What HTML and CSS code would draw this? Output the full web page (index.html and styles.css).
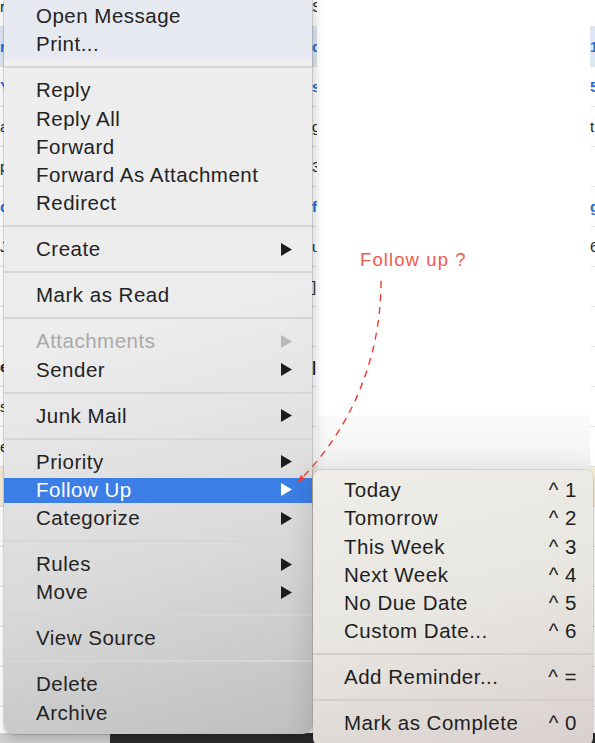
FILE: index.html
```html
<!DOCTYPE html>
<html lang="en">
<head>
    <meta charset="UTF-8">
    <title>Follow Up</title>
    <link rel="stylesheet" href="styles.css">
</head>
<body>
    <div class="mail">
        <div class="list">
            <div class="row"><span class="cell">r</span><span></span><span class="cell">S</span><span></span><span class="cell"></span></div>
            <div class="row selected"><span class="cell blue">n</span><span></span><span class="cell blue">c</span><span></span><span class="cell blue">1</span></div>
            <div class="row"><span class="cell blue">Y</span><span></span><span class="cell blue">s</span><span></span><span class="cell blue">5</span></div>
            <div class="row"><span class="cell">a</span><span></span><span class="cell">g</span><span></span><span class="cell">t</span></div>
            <div class="row"><span class="cell">p</span><span></span><span class="cell">3</span><span></span><span class="cell"></span></div>
            <div class="row"><span class="cell blue">c</span><span></span><span class="cell blue">f</span><span></span><span class="cell blue">g</span></div>
            <div class="row"><span class="cell">J</span><span></span><span class="cell">u</span><span></span><span class="cell">6</span></div>
            <div class="row"><span class="cell"></span><span></span><span class="cell">]</span><span></span><span class="cell"></span></div>
            <div class="row"><span class="cell"></span><span></span><span class="cell"></span><span></span><span class="cell"></span></div>
            <div class="row"><span class="cell bold">e</span><span></span><span class="cell bold">|</span><span></span><span class="cell"></span></div>
            <div class="row"><span class="cell">s</span><span></span><span class="cell"></span><span></span><span class="cell"></span></div>
            <div class="row"><span class="cell">e</span><span></span><span class="cell"></span><span></span><span class="cell"></span></div>
            <div class="row flagged"><span class="cell"></span><span></span><span class="cell"></span><span></span><span class="cell"></span></div>
            <div class="row"><span class="cell"></span><span></span><span class="cell"></span><span></span><span class="cell"></span></div>
            <div class="row"><span class="cell"></span><span></span><span class="cell"></span><span></span><span class="cell"></span></div>
            <div class="row"><span class="cell"></span><span></span><span class="cell"></span><span></span><span class="cell"></span></div>
            <div class="row"><span class="cell"></span><span></span><span class="cell"></span><span></span><span class="cell"></span></div>
            <div class="row"><span class="cell"></span><span></span><span class="cell"></span><span></span><span class="cell"></span></div>
        </div>
        <div class="footer">
            <div class="footer-left"></div>
            <div class="footer-dark"></div>
        </div>
    </div>

    <div class="whiteout"></div>

    <!-- context menu -->
    <div class="menu">
        <div class="group tinted">
            <div class="item">Open Message</div>
            <div class="item">Print...</div>
        </div>
        <div class="sep"></div>
        <div class="item">Reply</div>
        <div class="item">Reply All</div>
        <div class="item">Forward</div>
        <div class="item">Forward As Attachment</div>
        <div class="item">Redirect</div>
        <div class="sep"></div>
        <div class="item">Create <svg class="arrow" viewBox="0 0 11 13"><polygon points="0,0 11,6.5 0,13"/></svg></div>
        <div class="sep"></div>
        <div class="item">Mark as Read</div>
        <div class="sep"></div>
        <div class="item disabled">Attachments <svg class="arrow" viewBox="0 0 11 13"><polygon points="0,0 11,6.5 0,13"/></svg></div>
        <div class="item">Sender <svg class="arrow" viewBox="0 0 11 13"><polygon points="0,0 11,6.5 0,13"/></svg></div>
        <div class="sep"></div>
        <div class="item">Junk Mail <svg class="arrow" viewBox="0 0 11 13"><polygon points="0,0 11,6.5 0,13"/></svg></div>
        <div class="sep"></div>
        <div class="item">Priority <svg class="arrow" viewBox="0 0 11 13"><polygon points="0,0 11,6.5 0,13"/></svg></div>
        <div class="item active">Follow Up <svg class="arrow" viewBox="0 0 11 13"><polygon points="0,0 11,6.5 0,13"/></svg></div>
        <div class="item">Categorize <svg class="arrow" viewBox="0 0 11 13"><polygon points="0,0 11,6.5 0,13"/></svg></div>
        <div class="sep"></div>
        <div class="item">Rules <svg class="arrow" viewBox="0 0 11 13"><polygon points="0,0 11,6.5 0,13"/></svg></div>
        <div class="item">Move <svg class="arrow" viewBox="0 0 11 13"><polygon points="0,0 11,6.5 0,13"/></svg></div>
        <div class="sep"></div>
        <div class="item">View Source</div>
        <div class="sep"></div>
        <div class="item">Delete</div>
        <div class="item">Archive</div>
    </div>

    <!-- follow up submenu -->
    <div class="submenu">
        <div class="item">Today <span class="key">^ 1</span></div>
        <div class="item">Tomorrow <span class="key">^ 2</span></div>
        <div class="item">This Week <span class="key">^ 3</span></div>
        <div class="item">Next Week <span class="key">^ 4</span></div>
        <div class="item">No Due Date <span class="key">^ 5</span></div>
        <div class="item">Custom Date... <span class="key">^ 6</span></div>
        <div class="sep"></div>
        <div class="item">Add Reminder... <span class="key">^ =</span></div>
        <div class="sep"></div>
        <div class="item">Mark as Complete <span class="key">^ 0</span></div>
    </div>

    <div class="note-text">Follow up ?</div>
    <svg class="note" viewBox="0 0 595 743">
        <path d="M381 281 C381 360 350 430 299 481" fill="none" stroke="#ec3b30" stroke-width="1.4" stroke-dasharray="7 6"/>
        <polygon points="297,483 305,479 301,475" fill="#ec3b30"/>
    </svg>
</body>
</html>
```

FILE: styles.css
```css
body {
    margin: 0;
    width: 595px;
    height: 743px;
    overflow: hidden;
    position: relative;
    background: #ffffff;
    font-family: 'Liberation Sans', Arial, sans-serif;
}
.mail {
    display: flex;
    flex-direction: column;
    height: 743px;
}
.list {
    flex: 1;
    overflow: hidden;
}
.row {
    display: grid;
    grid-template-columns: 4px 308px 6px 272px 5px;
    height: 40px;
    box-sizing: border-box;
    border-bottom: 1px solid #e3e3e3;
    font-size: 15px;
    line-height: 40px;
    color: #222;
}
.row:first-child {
    margin-top: -13px;
}
.row.selected {
    background-color: #dde7f3;
}
.row.flagged {
    background-color: #f6eed6;
}
.cell {
    overflow: hidden;
    white-space: nowrap;
}
.cell.blue {
    color: #1f6fd6;
    font-weight: 700;
}
.cell.bold {
    font-weight: 700;
}
.footer {
    display: flex;
    height: 10px;
}
.footer-left {
    width: 110px;
    background-color: #cfcfcf;
}
.footer-dark {
    flex: 1;
    background-color: #2b2b2b;
}
.whiteout {
    position: absolute;
    left: 317px;
    top: 0;
    width: 273px;
    height: 480px;
    background: linear-gradient(#ffffff 0, #ffffff 415px, #fafafa 416px, #f0f0f0 100%);
}
.menu {
    position: absolute;
    left: 4px;
    top: -4px;
    width: 308px;
    box-sizing: border-box;
    padding: 6px 0 7px;
    border-radius: 0 0 9px 9px;
    background: linear-gradient(165deg, #eeeeee 0%, #ececec 45%, #d9d9d9 75%, #bfbfbf 100%);
    box-shadow: 0 0 0 1px rgba(0, 0, 0, 0.12), 2px 4px 12px rgba(0, 0, 0, 0.2);
}
.group.tinted {
    background-color: #e6eaf0;
    margin-top: -6px;
    padding-top: 6px;
}
.item {
    display: flex;
    justify-content: space-between;
    align-items: center;
    box-sizing: border-box;
    height: 28.25px;
    padding: 0 20px 0 32px;
    font-size: 20.5px;
    letter-spacing: 0.5px;
    color: #232323;
    white-space: nowrap;
}
.item.disabled {
    color: #a9a9a9;
}
.item.disabled .arrow {
    fill: #b8b8b8;
}
.item.active {
    color: #ffffff;
    background: linear-gradient(transparent 1.6px, #3b7ee6 1.6px, #3b7ee6 26.6px, transparent 26.6px);
}
.item.active .arrow {
    fill: #ffffff;
}
.arrow {
    width: 11px;
    height: 13px;
    fill: #1c1c1c;
}
.sep {
    height: 17.75px;
    display: flex;
    align-items: center;
}
.sep::before {
    content: "";
    flex: 1;
    height: 2px;
    background-color: #d6d6d6;
}
.submenu {
    position: absolute;
    left: 313px;
    top: 470px;
    width: 280px;
    box-sizing: border-box;
    padding: 6px 0 8px;
    border-radius: 8px;
    background: linear-gradient(165deg, #efede7 0%, #e8e6e0 50%, #d9d0cf 100%);
    box-shadow: 0 0 0 1px rgba(0, 0, 0, 0.1), 0 6px 30px rgba(0, 0, 0, 0.16);
}
.submenu .item {
    padding: 0 16px 0 31px;
    color: #1e1e1e;
}
.submenu .sep::before {
    background-color: #d2cfca;
}
.note {
    position: absolute;
    left: 0;
    top: 0;
    width: 595px;
    height: 743px;
}
.note-text {
    position: absolute;
    left: 360px;
    top: 249px;
    font-size: 18.5px;
    letter-spacing: 1.1px;
    color: #ef5a4d;
}
```
